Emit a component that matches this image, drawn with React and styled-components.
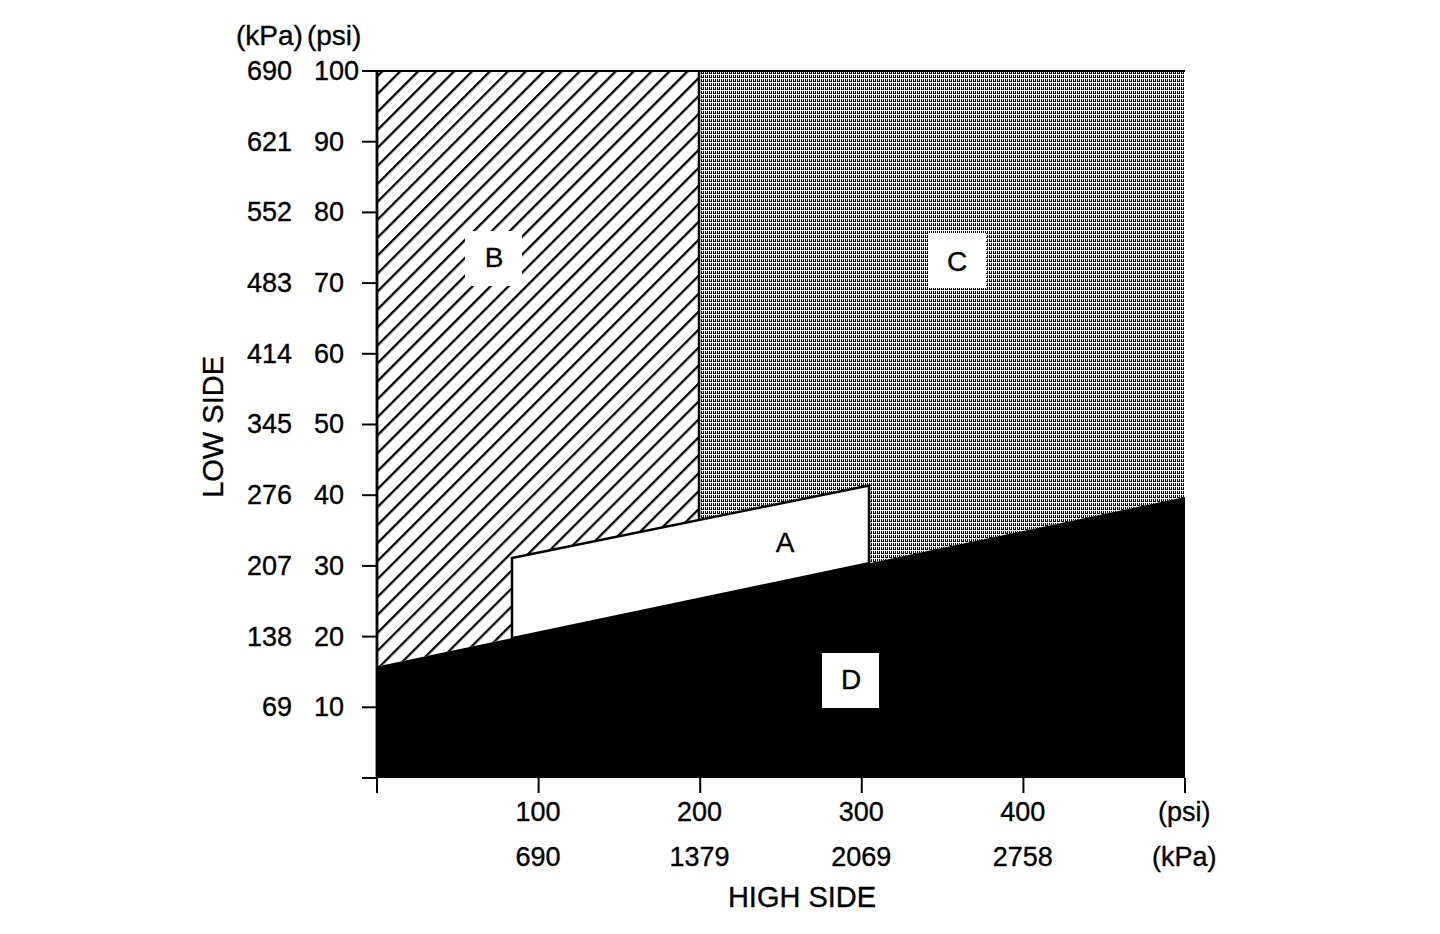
import React from 'react';
import styled, { createGlobalStyle } from 'styled-components';

const GlobalStyle = createGlobalStyle`
    html, body {
        margin: 0;
        padding: 0;
        background: #fff;
    }
    body {
        font-family: "Liberation Sans", Arial, sans-serif;
        color: #000;
        -webkit-text-stroke: 0.35px #000;
    }
`;

// plot geometry inside the svg (svg sits at page x=361, y=55)
const PX = 16;
const PY = 16;
const W = 808;
const H = 707;
const xAt = k => PX + (k * W) / 5;
const yAt = k => PY + H - (k * H) / 10;

const dLine = x => 611.5 - (x - 16) * (169.5 / 808);
const aTop = x => 503 - (x - 151) * (72.5 / 357);

const A_L = 151;
const A_R = 508;
const SEP = 338;

const pts = list => list.map(p => p.join(',')).join(' ');

const Page = styled.div`
    width: 1440px;
    height: 934px;
    overflow: hidden;
    display: grid;
    align-content: start;
    grid-template-columns: 196px 34px 62px 22px 47px 1fr;
    grid-template-rows: 55px 741px auto auto auto;
`;

const UnitHeader = styled.div`
    grid-column: 3 / 6;
    grid-row: 1;
    align-self: end;
    margin-bottom: 3px;
    padding-left: 6px;
    display: flex;
    gap: 4px;
    font-size: 28px;
    line-height: 32px;
    white-space: nowrap;
`;

const YTitle = styled.div`
    grid-column: 2;
    grid-row: 2;
    align-self: start;
    margin-top: 16px;
    padding-top: 2px;
    height: 707px;
    display: flex;
    align-items: center;
    justify-content: center;
    font-size: 29px;
    line-height: 34px;
    white-space: nowrap;

    span {
        writing-mode: vertical-rl;
        transform: rotate(180deg);
    }
`;

const TickLabels = styled.div`
    grid-column: ${p => p.col};
    grid-row: 2;
    align-self: start;
    height: 668.3px;
    display: flex;
    flex-direction: column;
    justify-content: space-between;
    align-items: ${p => (p.right ? 'flex-end' : 'flex-start')};
    font-size: 27px;
    line-height: 32px;
`;

const Plot = styled.svg`
    grid-column: 6;
    grid-row: 2;
    display: block;
    width: 830px;
    height: 741px;
`;

const XLabels = styled.div`
    grid-column: 6;
    grid-row: ${p => p.row};
    margin-top: ${p => p.gap || 0}px;
    padding-left: 96.2px;
    display: flex;
    font-size: 27px;
    line-height: 32px;

    span {
        flex: 0 0 161.6px;
        text-align: center;
    }
`;

const XTitle = styled.div`
    grid-column: 6;
    grid-row: 5;
    margin-top: 7px;
    width: 830px;
    box-sizing: border-box;
    padding-left: 52px;
    text-align: center;
    font-size: 29px;
    line-height: 34px;
`;

const Region = styled.polygon`
    shape-rendering: crispEdges;
`;

const RegionLabel = styled.text`
    font-family: "Liberation Sans", Arial, sans-serif;
    font-size: 28px;
    text-anchor: middle;
    stroke: #000;
    stroke-width: 0.35px;
`;

const psi = [100, 90, 80, 70, 60, 50, 40, 30, 20, 10];
const kpa = [690, 621, 552, 483, 414, 345, 276, 207, 138, 69];

const boxes = [
    { id: 'B', x: 104, y: 176, tx: 133, ty: 212 },
    { id: 'C', x: 568, y: 178, tx: 596, ty: 216 },
    { id: 'D', x: 461, y: 598, tx: 490, ty: 634 },
];

const Chart = () => {
    const right = PX + W;
    const bottom = PY + H;

    const regionB = [
        [PX, PY], [SEP, PY], [SEP, aTop(SEP)], [A_L, aTop(A_L)],
        [A_L, dLine(A_L)], [PX, dLine(PX)],
    ];
    const regionC = [
        [SEP, PY], [right, PY], [right, dLine(right)], [A_R, dLine(A_R)],
        [A_R, aTop(A_R)], [SEP, aTop(SEP)],
    ];
    const regionD = [[PX, dLine(PX)], [right, dLine(right)], [right, bottom], [PX, bottom]];
    const regionA = [[A_L, aTop(A_L)], [A_R, aTop(A_R)], [A_R, dLine(A_R)], [A_L, dLine(A_L)]];

    return (
        <Plot viewBox="0 0 830 741">
            <defs>
                <pattern id="hatch" patternUnits="userSpaceOnUse" width="12.7" height="20"
                    patternTransform="rotate(45)">
                    <rect x="0" y="0" width="2.3" height="20" fill="#000" />
                </pattern>
                <pattern id="stipple" patternUnits="userSpaceOnUse" width="4" height="4">
                    <rect x="0" y="0" width="1" height="3" fill="#000" />
                    <rect x="2" y="0" width="1" height="3" fill="#000" />
                    <rect x="1" y="2" width="1" height="1" fill="#000" />
                </pattern>
            </defs>

            <rect x={PX} y={PY} width={W} height={H} fill="#fff" />
            <Region points={pts(regionC)} fill="url(#stipple)" />
            <polygon points={pts(regionB)} fill="url(#hatch)" />
            <polygon points={pts(regionD)} fill="#000" />
            <polygon points={pts(regionA)} fill="#fff" stroke="#000" strokeWidth="2.5" />
            <line x1={SEP} y1={PY} x2={SEP} y2={aTop(SEP)} stroke="#000" strokeWidth="2.5" />

            <line x1={PX} y1={PY} x2={right} y2={PY} stroke="#000" strokeWidth="2.2" />
            <line x1={PX} y1={PY - 1} x2={PX} y2={bottom} stroke="#000" strokeWidth="2.8" />

            {Array.from({ length: 11 }, (_, k) => (
                <line key={'y' + k} x1="1" y1={yAt(k)} x2={PX} y2={yAt(k)} stroke="#000" strokeWidth="2" />
            ))}
            {Array.from({ length: 6 }, (_, k) => (
                <line key={'x' + k} x1={xAt(k)} y1={bottom} x2={xAt(k)} y2={bottom + 15} stroke="#000" strokeWidth="2" />
            ))}

            {boxes.map(b => (
                <rect key={b.id + 'box'} x={b.x} y={b.y} width="57" height="55" fill="#fff" />
            ))}
            {boxes.map(b => (
                <RegionLabel key={b.id} x={b.tx} y={b.ty}>{b.id}</RegionLabel>
            ))}
            <RegionLabel x="424" y="497">A</RegionLabel>
        </Plot>
    );
};

const App = () => {
    return (
        <Page>
            <GlobalStyle />
            <UnitHeader>
                <span>(kPa)</span>
                <span>(psi)</span>
            </UnitHeader>

            <YTitle>
                <span>LOW SIDE</span>
            </YTitle>

            <TickLabels col={3} right>
                {kpa.map(v => <span key={v}>{v}</span>)}
            </TickLabels>
            <TickLabels col={5}>
                {psi.map(v => <span key={v}>{v}</span>)}
            </TickLabels>

            <Chart />

            <XLabels row={3}>
                <span>100</span>
                <span>200</span>
                <span>300</span>
                <span>400</span>
                <span>(psi)</span>
            </XLabels>
            <XLabels row={4} gap={13}>
                <span>690</span>
                <span>1379</span>
                <span>2069</span>
                <span>2758</span>
                <span>(kPa)</span>
            </XLabels>

            <XTitle>HIGH SIDE</XTitle>
        </Page>
    );
};

export default App;
